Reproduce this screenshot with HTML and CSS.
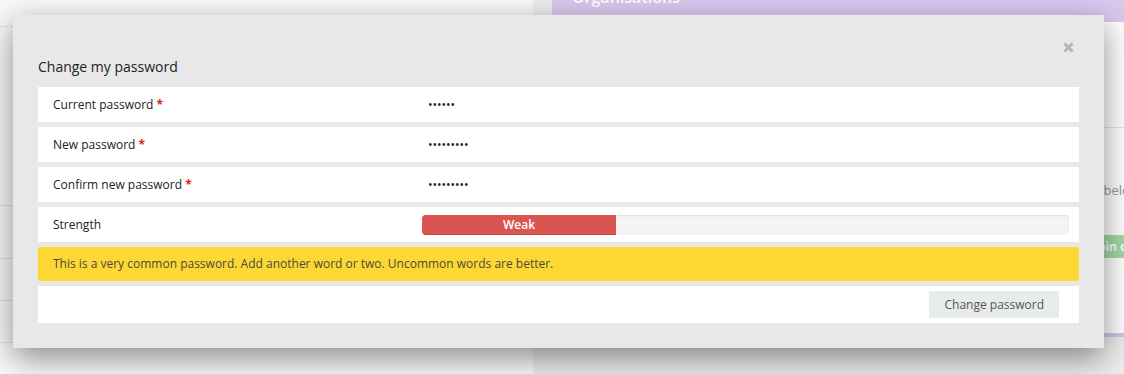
FILE: index.html
```html
<!doctype html>
<html>
<head>
<meta charset="utf-8">
<link rel="stylesheet" href="styles.css">
<title>Change my password</title>
</head>

<body>

<div class="page">
	<div class="side">
		<div class="side-head"></div>
		<div class="side-intro"></div>
		<div class="side-row tall"></div>
		<div class="side-row"></div>
		<div class="side-row"></div>
		<div class="side-row"></div>
	</div>
	<div class="org">
		<div class="org-head">Organisations</div>
		<div class="org-intro"></div>
		<div class="org-list">
			<div class="org-main"></div>
			<div class="org-side">
				<p class="org-note">Listed below.</p>
				<button class="org-join">Join organisation</button>
			</div>
		</div>
	</div>
</div>

<div class="modal">
	<span class="close" title="Close">
		<svg width="11" height="11" viewBox="0 0 11 11"><path d="M1.5 1.5L9.5 9.5M9.5 1.5L1.5 9.5" stroke="#b4b4b4" stroke-width="3"/></svg>
	</span>
	<h3 class="modal-title">Change my password</h3>
	<form class="pwform">
		<div class="field">
			<label>Current password <span class="req">*</span></label>
			<div class="value"><input type="password" value="secret"></div>
		</div>
		<div class="field">
			<label>New password <span class="req">*</span></label>
			<div class="value"><input type="password" value="password1"></div>
		</div>
		<div class="field">
			<label>Confirm new password <span class="req">*</span></label>
			<div class="value"><input type="password" value="password1"></div>
		</div>
		<div class="field">
			<label>Strength</label>
			<div class="value">
				<div class="progress"><div class="progress-bar">Weak</div></div>
			</div>
		</div>
		<div class="alert">This is a very common password. Add another word or two. Uncommon words are better.</div>
		<div class="actions">
			<button type="button" class="btn">Change password</button>
		</div>
	</form>
</div>

</body>
</html>
```

FILE: styles.css
```css
*
{
	box-sizing:border-box;
}
body
{
	margin:0;
	background:#ededed;
	font-family:"Open Sans","Liberation Sans",sans-serif;
	font-size:12px;
	color:#222;
	overflow:hidden;
	height:374px;
}

/* page behind the dialog */
.page
{
	display:grid;
	grid-template-columns:533px 600px;
	gap:19px;
	margin-top:-20px;
	width:1160px;
}
.side
{
	background:#f9f9f9;
}
.side-head
{
	height:47px;
	border-bottom:1px dashed #dcdcdc;
}
.side-intro
{
	height:178px;
}
.side-row
{
	height:42px;
	border-top:1px solid #e2e2e2;
}
.side-row.tall
{
	height:53px;
}
.org
{
	background:#fff;
	border-bottom:4px solid #d4c1ec;
	height:357px;
	display:flex;
	flex-direction:column;
}
.org-head
{
	background:#dac8ef;
	color:#fff;
	font-size:16px;
	font-weight:600;
	line-height:22px;
	padding:6px 20px 14px;
}
.org-intro
{
	height:106px;
	border-bottom:1px solid #e6e6e6;
}
.org-list
{
	display:grid;
	grid-template-columns:492px 1fr;
	padding-left:20px;
}
.org-note
{
	margin:53px 0 0;
	font-size:13px;
	color:#999;
	white-space:nowrap;
}
.org-join
{
	margin:36px 0 0 22px;
	border:0;
	background:#a5d9a7;
	color:#fff;
	font-family:inherit;
	font-size:12px;
	font-weight:700;
	line-height:15px;
	padding:4px 8px;
	white-space:nowrap;
}

/* dialog */
.modal
{
	position:absolute;
	left:13px;
	top:15px;
	width:1091px;
	background:#e8e8e8;
	padding:42px 25px 25px;
	box-shadow:0 10px 30px rgba(0,0,0,0.45);
}
.close
{
	position:absolute;
	right:30px;
	top:27px;
	width:11px;
	height:11px;
	cursor:pointer;
}
.close svg
{
	display:block;
}
.modal-title
{
	margin:0 0 10px;
	font-size:14px;
	font-weight:400;
	line-height:20px;
	color:#222;
}
.pwform
{
	margin:0;
}
.field
{
	display:grid;
	grid-template-columns:384px 1fr;
	align-items:center;
	height:35px;
	background:#fff;
	margin-bottom:5px;
}
.field label
{
	padding-left:15px;
	color:#222;
}
.req
{
	color:#e32020;
	font-weight:700;
}
.value
{
	padding-right:10px;
}
.value input
{
	border:0;
	outline:0;
	background:transparent;
	padding:0 6px;
	font-family:inherit;
	font-size:12px;
	color:#222;
	width:100%;
}
.progress
{
	height:20px;
	background:#f4f4f4;
	border-radius:4px;
	box-shadow:inset 0 1px 2px rgba(0,0,0,0.1);
	overflow:hidden;
}
.progress-bar
{
	width:30%;
	height:100%;
	background:#db5550;
	color:#fff;
	text-align:center;
	font-weight:600;
	line-height:20px;
	box-shadow:inset 0 -1px 0 rgba(0,0,0,0.15);
}
.alert
{
	background:#fdd835;
	color:#4a4a3a;
	border-radius:3px;
	padding:8px 15px;
	line-height:18px;
	margin-bottom:5px;
}
.actions
{
	display:flex;
	justify-content:flex-end;
	background:#fff;
	padding:5px 20px;
}
.btn
{
	border:0;
	background:#e8ebec;
	color:#555;
	font-family:inherit;
	font-size:12px;
	line-height:17px;
	padding:5px 15px;
	cursor:pointer;
}
.btn:hover
{
	background:#dcdfe0;
}
```
